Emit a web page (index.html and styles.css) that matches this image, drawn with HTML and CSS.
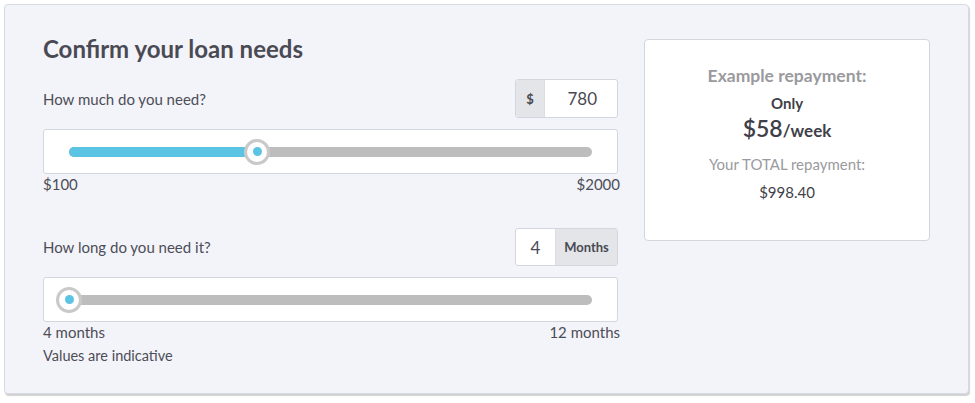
FILE: index.html
```html
<!DOCTYPE html>
<html>
<head>
<meta charset="utf-8">
<link rel="stylesheet" href="styles.css">
</head>
<body>
<div class="card">
  <div class="left">
    <h1 class="title">Confirm your loan needs</h1>
    <div class="row">
      <div class="label">How much do you need?</div>
      <div class="group">
        <span class="addon addon-dollar">$</span>
        <span class="value value-amount">780</span>
      </div>
    </div>
    <div class="slider">
      <div class="track">
        <div class="fill" style="width:36%"></div>
        <div class="thumb" style="left:36%"></div>
      </div>
    </div>
    <div class="range"><span>$100</span><span>$2000</span></div>

    <div class="row row-2">
      <div class="label">How long do you need it?</div>
      <div class="group">
        <span class="value value-term">4</span>
        <span class="addon addon-months">Months</span>
      </div>
    </div>
    <div class="slider">
      <div class="track">
        <div class="thumb" style="left:0%"></div>
      </div>
    </div>
    <div class="range"><span>4 months</span><span>12 months</span></div>
    <div class="note">Values are indicative</div>
  </div>
  <div class="right">
    <div class="summary">
      <div class="s-head">Example repayment:</div>
      <div class="s-only">Only</div>
      <div class="s-amount">$58<span class="s-unit">/week</span></div>
      <div class="s-total-label">Your TOTAL repayment:</div>
      <div class="s-total">$998.40</div>
    </div>
  </div>
</div>
</body>
</html>
```

FILE: styles.css
```css
* { box-sizing: border-box; }
html, body { margin: 0; padding: 0; background: #fff; }
body {
  font-family: Lato, "Open Sans", sans-serif;
  color: #4d4d57;
  padding: 4px;
}
.card {
  width: 965px;
  height: 390px;
  background: #f3f4f9;
  border: 1px solid #d8dae3;
  border-radius: 4px;
  box-shadow: 1px 2px 1px rgba(0,0,0,0.18);
  padding: 30px 38px 0 38px;
  display: flex;
}
.left { width: 575px; }
.title {
  margin: 0;
  font-size: 24px;
  line-height: 28px;
  font-weight: 700;
  color: #4a4a54;
}
.row {
  margin-top: 16px;
  height: 39px;
  display: flex;
  align-items: center;
  justify-content: space-between;
}
.row-2 { margin-top: 33px; height: 38px; }
.label { font-size: 15px; }
.group {
  display: flex;
  height: 100%;
  width: 103px;
  border: 1px solid #d3d6de;
  border-radius: 3px;
  overflow: hidden;
  background: #fff;
}
.addon {
  background: #e4e5e8;
  display: flex;
  align-items: center;
  justify-content: center;
  font-weight: 700;
  font-size: 13px;
  color: #4a4a54;
}
.addon-dollar { width: 29px; border-right: 1px solid #dcdde2; }
.addon-months { flex: 1; }
.value {
  display: flex;
  align-items: center;
  font-size: 17px;
  color: #4a4a54;
}
.value-amount { flex: 1; justify-content: flex-end; padding-right: 20px; }
.value-term { width: 40px; justify-content: center; border-right: 1px solid #dcdde2; }
.slider {
  margin-top: 11px;
  height: 45px;
  background: #fff;
  border: 1px solid #d3d6de;
  border-radius: 3px;
  padding: 0 25px;
  display: flex;
  align-items: center;
}
.track {
  position: relative;
  width: 100%;
  height: 10px;
  border-radius: 5px;
  background: #bdbdbd;
}
.fill {
  height: 100%;
  border-radius: 5px;
  background: #5bc3e3;
}
.thumb {
  position: absolute;
  top: 50%;
  width: 26px;
  height: 26px;
  margin: -13px 0 0 -13px;
  border-radius: 50%;
  background: #fff;
  border: 3px solid #c9c9c9;
}
.thumb::after {
  content: "";
  position: absolute;
  left: 50%;
  top: 50%;
  width: 9px;
  height: 9px;
  margin: -4.5px 0 0 -4.5px;
  border-radius: 50%;
  background: #5bc3e3;
}
.range {
  display: flex;
  justify-content: space-between;
  font-size: 15px;
  line-height: 21px;
  margin-right: -2px;
}
.note { margin-top: 2px; font-size: 14.5px; line-height: 21px; }
.right { width: 286px; margin-left: 26px; padding-top: 4px; }
.summary {
  height: 202px;
  background: #fff;
  border: 1px solid #d3d6de;
  border-radius: 4px;
  text-align: center;
  padding-top: 25px;
}
.s-head { font-size: 17.5px; font-weight: 700; color: #9a9a9e; line-height: 22px; }
.s-only { margin-top: 6px; font-size: 15px; font-weight: 700; line-height: 20px; color: #3f3f48; }
.s-amount { font-size: 23px; line-height: 30px; font-weight: 600; color: #3f3f48; }
.s-unit { font-size: 17px; font-weight: 700; }
.s-total-label { margin-top: 8px; font-size: 15px; color: #9a9a9e; line-height: 20px; }
.s-total { margin-top: 8px; font-size: 15px; line-height: 20px; color: #3f3f48; }
```
